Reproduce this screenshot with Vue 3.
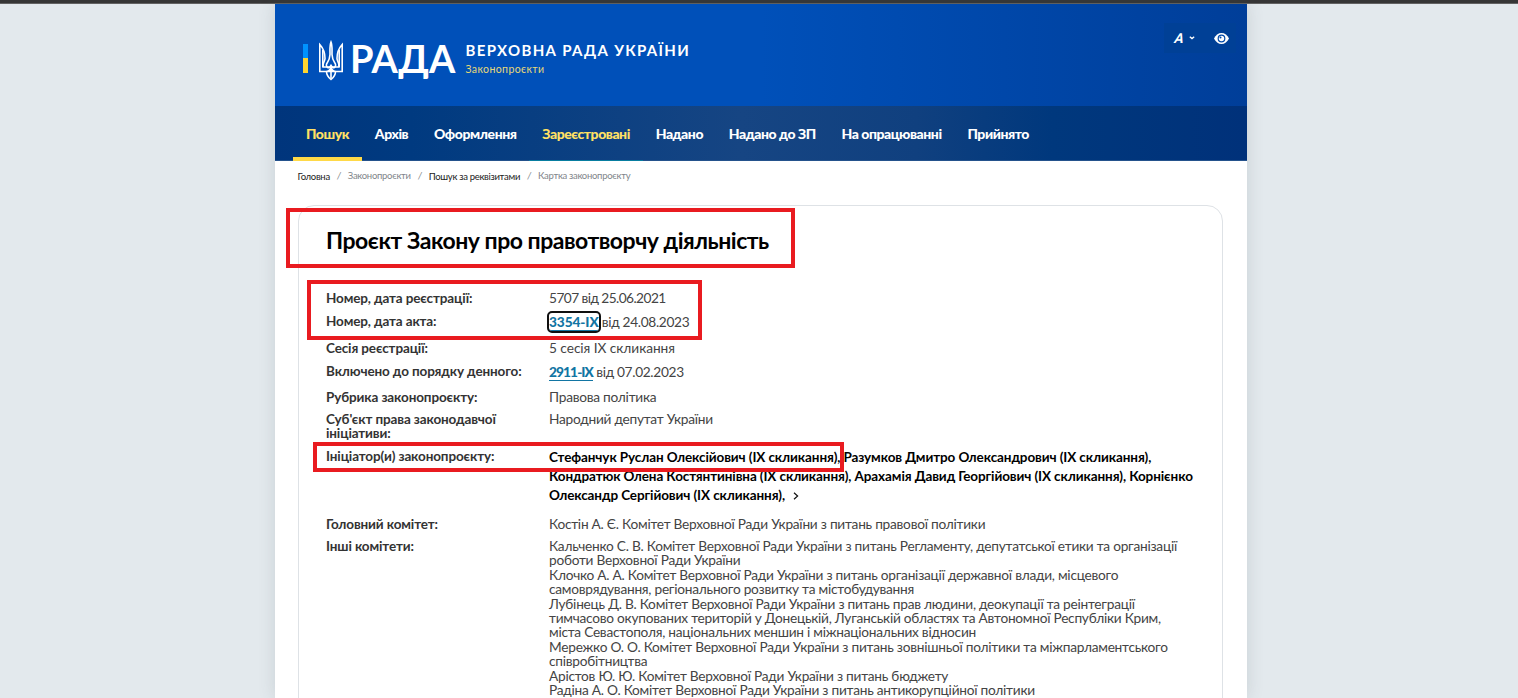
<script setup>
import { ref } from 'vue';

const menu = ref([
  { name: 'Пошук', cls: 'current' },
  { name: 'Архів' },
  { name: 'Оформлення' },
  { name: 'Зареєстровані', cls: 'visited' },
  { name: 'Надано' },
  { name: 'Надано до ЗП' },
  { name: 'На опрацюванні' },
  { name: 'Прийнято' }
]);

const initiators = [
  'Стефанчук Руслан Олексійович (IX скликання), Разумков Дмитро Олександрович (IX скликання),',
  'Кондратюк Олена Костянтинівна (IX скликання), Арахамія Давид Георгійович (IX скликання), Корнієнко',
  'Олександр Сергійович (IX скликання),'
];

const committees = [
  'Кальченко С. В. Комітет Верховної Ради України з питань Регламенту, депутатської етики та організації',
  'роботи Верховної Ради України',
  'Клочко А. А. Комітет Верховної Ради України з питань організації державної влади, місцевого',
  'самоврядування, регіонального розвитку та містобудування',
  'Лубінець Д. В. Комітет Верховної Ради України з питань прав людини, деокупації та реінтеграції',
  'тимчасово окупованих територій у Донецькій, Луганській областях та Автономної Республіки Крим,',
  'міста Севастополя, національних меншин і міжнаціональних відносин',
  'Мережко О. О. Комітет Верховної Ради України з питань зовнішньої політики та міжпарламентського',
  'співробітництва',
  'Арістов Ю. Ю. Комітет Верховної Ради України з питань бюджету',
  'Радіна А. О. Комітет Верховної Ради України з питань антикорупційної політики'
];
</script>

<template>
  <div class="page">
    <div class="topline"></div>
    <div class="container">
      <header class="header">
        <div class="logo">
          <div class="flag"></div>
          <svg class="trident" viewBox="0 0 26 40" fill="none" stroke="#fff" stroke-width="1.6">
            <path d="M13 1.500 C11.600 5 12 9 12 14 C11.800 19 10.500 20.500 8.800 23 C7.500 26 10.500 29.500 13 25 C15.500 29.500 18.500 26 17.200 23 C15.500 20.500 14.200 19 14 14 C14 9 14.400 5 13 1.500 Z" />
            <path d="M1.800 4 V31 H8.500 C8.500 35 10.500 37 13 39 C15.500 37 17.500 35 17.500 31 H24.200 V4 C20.500 8 19 13 19 18 C19 21 21.500 22 21 26.500 H5 C4.500 22 7 21 7 18 C7 13 5.500 8 1.800 4 Z" />
            <path d="M4.800 9.500 V26.500 M21.200 9.500 V26.500 M13 25 V38 M8.500 31 C11 31 12.500 29 13 26 C13.500 29 15 31 17.500 31 M8.500 31 H17.500" />
          </svg>
          <span class="rada">РАДА</span>
          <div class="site">
            <div class="site-name">ВЕРХОВНА РАДА УКРАЇНИ</div>
            <div class="site-sub">Законопроєкти</div>
          </div>
        </div>
        <div class="tools">
          <span class="font-size">A</span>
          <svg class="caret" viewBox="0 0 6 4" fill="none" stroke="#fff" stroke-width="1.3"><path d="M.8.8 3 2.600 5.200.8" /></svg>
          <svg class="eye" viewBox="0 0 15 11">
            <path d="M0 5.500 C1.600 2 4.400 0 7.500 0 S13.400 2 15 5.500 C13.400 9 10.600 11 7.500 11 S1.600 9 0 5.500 Z" fill="#fff" />
            <circle cx="7.500" cy="5.500" r="3.300" fill="#fff" stroke="#0049a8" stroke-width="1.200" />
            <circle cx="6.500" cy="4.500" r="1" fill="#0049a8" />
          </svg>
        </div>
      </header>

      <nav class="menu">
        <a v-for="item in menu" :key="item.name" :class="item.cls">{{ item.name }}</a>
      </nav>

      <div class="breadcrumbs">
        <a>Головна</a><i>/</i><span>Законопроєкти</span><i>/</i><a>Пошук за реквізитами</a><i>/</i><span>Картка законопроєкту</span>
      </div>

      <main class="card">
        <h1>Проєкт Закону про правотворчу діяльність</h1>
        <div class="row reg">
          <div class="label">Номер, дата реєстрації:</div>
          <div class="value">5707 від 25.06.2021</div>
        </div>
        <div class="row act">
          <div class="label">Номер, дата акта:</div>
          <div class="value"><a class="link focused">3354-IX</a> від 24.08.2023</div>
        </div>
        <div class="row session">
          <div class="label">Сесія реєстрації:</div>
          <div class="value">5 сесія IX скликання</div>
        </div>
        <div class="row agenda">
          <div class="label">Включено до порядку денного:</div>
          <div class="value"><a class="link">2911-IX</a> від 07.02.2023</div>
        </div>
        <div class="row rubric">
          <div class="label">Рубрика законопроєкту:</div>
          <div class="value">Правова політика</div>
        </div>
        <div class="row subject">
          <div class="label">Суб'єкт права законодавчої<br>ініціативи:</div>
          <div class="value">Народний депутат України</div>
        </div>
        <div class="row initiators">
          <div class="label">Ініціатор(и) законопроєкту:</div>
          <div class="value people">
            <div v-for="(line, i) in initiators" :key="i">{{ line }}<svg v-if="i === 2" class="more" viewBox="0 0 6 8" fill="none" stroke="#111" stroke-width="1.2"><path d="M1 .8 4.600 4 1 7.200" /></svg></div>
          </div>
        </div>
        <div class="row main-committee">
          <div class="label">Головний комітет:</div>
          <div class="value">Костін А. Є. Комітет Верховної Ради України з питань правової політики</div>
        </div>
        <div class="row">
          <div class="label">Інші комітети:</div>
          <div class="value committees">
            <div v-for="line in committees" :key="line">{{ line }}</div>
          </div>
        </div>
      </main>
    </div>

    <!-- червоні рамки поверх сторінки -->
    <div class="mark mark-title"></div>
    <div class="mark mark-number"></div>
    <div class="mark mark-author"></div>
  </div>
</template>

<style>
body {
  margin: 0;
  overflow: hidden;
}
</style>

<style scoped>
.page {
  position: relative;
  height: 698px;
  overflow: hidden;
  background: #e3e9ed;
  font-family: Lato, "Open Sans", sans-serif;
  color: #444;
}

.topline {
  height: 3px;
  background: #363636;
  border-bottom: 1px solid #626262;
}

.container {
  width: 972.500px;
  height: 694px;
  margin-left: 274.500px;
  background: #fff;
  box-shadow: 0 0 16px rgba(60, 80, 90, 0.16);
}

.header {
  height: 102px;
  display: flex;
  justify-content: space-between;
  align-items: flex-start;
  background: linear-gradient(90deg, #0050b9 0%, #0050b9 50%, #003e99 100%);
  color: #fff;
}

.logo {
  display: flex;
  align-items: flex-start;
  padding: 36px 0 0 28.500px;
}

.flag {
  width: 5px;
  height: 29px;
  margin: 4px 10px 0 0;
  background: linear-gradient(#0092ff 50%, #ffd530 50%);
}

.trident {
  width: 26px;
  height: 41px;
}

.rada {
  width: 108px;
  margin-top: -2px;
  padding-left: 6px;
  font-size: 38px;
  line-height: 40px;
  font-weight: 700;
  letter-spacing: -0.2px;
}

.site {
  padding: 1px 0 0 7.500px;
  white-space: nowrap;
}

.site-name {
  font-size: 15px;
  line-height: 18px;
  font-weight: 700;
  letter-spacing: 1.32px;
}

.site-sub {
  margin-top: 4px;
  font-size: 10.500px;
  line-height: 13px;
  letter-spacing: 0.4px;
  color: #e6d878;
}

.tools {
  display: flex;
  align-items: center;
  width: 72px;
  height: 30px;
  box-sizing: border-box;
  margin: 19px 11px 0 0;
  padding-left: 11px;
  background: #004096;
}

.font-size {
  width: 10px;
  margin-right: 4px;
  font-size: 13.500px;
  font-weight: 900;
  font-style: italic;
  transform: skewX(-10deg);
}

.caret {
  width: 6px;
  height: 4px;
}

.eye {
  width: 15px;
  height: 11px;
  margin-left: 19px;
}

.menu {
  display: flex;
  height: 54px;
  padding-left: 18.500px;
  background: linear-gradient(90deg, #00357c 0%, #003a80 14%, #164583 48%, #10407f 66%, #00387d 80%, #00317a 100%);
  border-bottom: 1px solid #24528c;
}

.menu a {
  height: 55px;
  box-sizing: border-box;
  padding: 0 12.800px 0 13px;
  font-size: 14px;
  line-height: 56px;
  font-weight: 900;
  letter-spacing: -0.45px;
  color: #fff;
  white-space: nowrap;
}

.menu .current {
  color: #ffe064;
  border-bottom: 4px solid #ffd947;
}

.menu .visited {
  color: #ffe064;
  border-bottom: 1px solid #087da0;
}

.breadcrumbs {
  display: flex;
  height: 44px;
  padding: 7.500px 0 0 23px;
  box-sizing: border-box;
  font-size: 9.500px;
  line-height: 14px;
  letter-spacing: -0.3px;
  color: #81868b;
  white-space: nowrap;
}

.breadcrumbs a {
  padding-top: 1.500px;
  color: #222;
}

.breadcrumbs i {
  width: 18px;
  text-align: center;
}

.card {
  height: 520px;
  margin: 0 24px 0 23.500px;
  padding: 19px 27px 0;
  box-sizing: border-box;
  border: 1px solid #dee2e6;
  border-radius: 16px 16px 0 0;
}

h1 {
  margin: 0;
  height: 66px;
  font-size: 23px;
  line-height: 30px;
  font-weight: 700;
  letter-spacing: -0.48px;
  color: #000;
  white-space: nowrap;
}

.row {
  display: flex;
  font-size: 13.700px;
  line-height: 14.400px;
  letter-spacing: -0.25px;
  white-space: nowrap;
}

.label {
  width: 223px;
  flex: none;
  font-size: 13.500px;
  font-weight: 700;
  letter-spacing: -0.13px;
  color: #333;
}

.reg {
  height: 23px;
}

.act {
  height: 27px;
}

.session {
  height: 23px;
}

.agenda {
  height: 26px;
}

.rubric {
  height: 22px;
}

.subject {
  height: 37px;
}

.initiators {
  height: 68px;
}

.main-committee {
  height: 22px;
}

.reg .value {
  letter-spacing: -0.56px;
}

.session .value {
  letter-spacing: -0.05px;
}

.act .value,
.agenda .value {
  padding-top: 1px;
  letter-spacing: -0.32px;
}

.link {
  font-weight: 900;
  color: #1275a3;
  border-bottom: 1px solid #1275a3;
}

.agenda .link {
  letter-spacing: -0.9px;
}

.link.focused {
  letter-spacing: -0.1px;
  outline: 2px solid #101010;
  border-radius: 3px;
}

.value.people {
  margin-top: -1px;
  font-size: 13.500px;
  line-height: 19px;
  font-weight: 700;
  letter-spacing: -0.1px;
  color: #000;
}

.more {
  width: 6px;
  height: 8px;
  margin-left: 8px;
}

.mark {
  position: absolute;
  box-sizing: border-box;
  border: 4px solid #e91b20;
}

.mark-title {
  left: 286px;
  top: 208px;
  width: 509px;
  height: 60px;
}

.mark-number {
  left: 307px;
  top: 280px;
  width: 395px;
  height: 60px;
}

.mark-author {
  left: 313px;
  top: 442px;
  width: 531px;
  height: 30px;
}
</style>
